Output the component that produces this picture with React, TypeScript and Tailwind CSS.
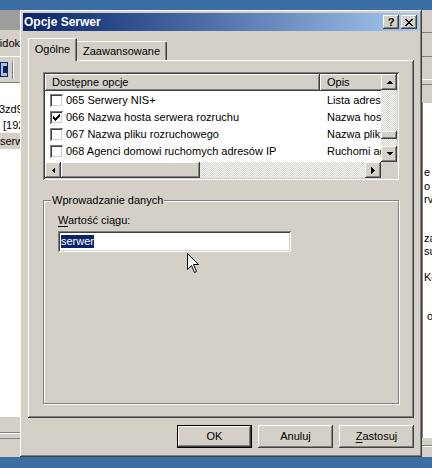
import React from "react";

// Win2000 bevels
const raised =
  "shadow-[inset_-1px_-1px_#404040,inset_1px_1px_#ffffff,inset_-2px_-2px_#808080,inset_2px_2px_#d4d0c8]";
const sunken =
  "shadow-[inset_1px_1px_#808080,inset_-1px_-1px_#ffffff,inset_2px_2px_#404040,inset_-2px_-2px_#d4d0c8]";
const headerBevel =
  "shadow-[inset_-1px_-1px_#404040,inset_1px_1px_#ffffff,inset_-2px_-2px_#808080]";
const dither =
  "bg-[image:repeating-conic-gradient(#d4d0c8_0_25%,#ffffff_0_50%)] bg-[length:2px_2px]";

type Dir = "up" | "down" | "left" | "right";

const Arrow = ({ dir }: { dir: Dir }) => {
  const vertical = dir === "up" || dir === "down";
  const pts: Record<Dir, string> = {
    up: "0,4 7,4 3.5,0.5",
    down: "0,0 7,0 3.5,3.5",
    left: "4,0 4,7 0.5,3.5",
    right: "0,0 0,7 3.5,3.5",
  };
  return (
    <svg
      width={vertical ? 7 : 4}
      height={vertical ? 4 : 7}
      viewBox={vertical ? "0 0 7 4" : "0 0 4 7"}
      shapeRendering="crispEdges"
    >
      <polygon points={pts[dir]} fill="#000" />
    </svg>
  );
};

const ScrollBtn = ({ dir }: { dir: Dir }) => (
  <div className={`w-4 h-4 shrink-0 bg-[#d4d0c8] flex items-center justify-center ${raised}`}>
    <Arrow dir={dir} />
  </div>
);

const Checkbox = ({ on }: { on: boolean }) => (
  <div className={`w-[13px] h-[13px] shrink-0 bg-white flex items-center justify-center ${sunken}`}>
    {on && (
      <svg width="7" height="7" viewBox="0 0 7 7" shapeRendering="crispEdges">
        <path d="M0 2h1v1h1v1h1v-1h1v-1h1v-1h1v-1h1v3h-1v1h-1v1h-1v1h-1v1h-1v-1h-1v-1h-1z" fill="#000" />
      </svg>
    )}
  </div>
);

const rows = [
  { on: false, name: "065 Serwery NIS+", desc: "Lista adresów serwerów NIS+" },
  { on: true, name: "066 Nazwa hosta serwera rozruchu", desc: "Nazwa hosta serwera rozruchu TFTP" },
  { on: false, name: "067 Nazwa pliku rozruchowego", desc: "Nazwa pliku rozruchowego" },
  { on: false, name: "068 Agenci domowi ruchomych adresów IP", desc: "Ruchomi agenci domowi IP" },
];

const OptionsList = () => (
  <div className={`w-[356px] h-[108px] p-[2px] bg-white ${sunken}`}>
    <div className="flex h-[88px]">
      <div className="w-[336px] overflow-hidden">
        <div className="flex h-[17px] w-[420px]">
          <div className={`w-[275px] shrink-0 bg-[#d4d0c8] pl-[7px] flex items-center ${headerBevel}`}>
            Dostępne opcje
          </div>
          <div className={`flex-1 bg-[#d4d0c8] pl-[7px] flex items-center ${headerBevel}`}>Opis</div>
        </div>
        <div className="pt-[1px]">
          {rows.map((r) => (
            <div key={r.name} className="flex h-[17px] items-center whitespace-nowrap">
              <div className="w-[275px] shrink-0 pl-[5px] flex items-center gap-[3px]">
                <Checkbox on={r.on} />
                <span>{r.name}</span>
              </div>
              <span className="pl-[7px]">{r.desc}</span>
            </div>
          ))}
        </div>
      </div>
      <div className="w-4 flex flex-col">
        <ScrollBtn dir="up" />
        <div className={`h-[41px] ${dither}`} />
        <div className={`h-[8px] bg-[#d4d0c8] ${raised}`} />
        <div className={`flex-1 ${dither}`} />
        <ScrollBtn dir="down" />
      </div>
    </div>
    <div className="flex h-4">
      <ScrollBtn dir="left" />
      <div className={`w-[139px] bg-[#d4d0c8] ${raised}`} />
      <div className={`flex-1 ${dither}`} />
      <ScrollBtn dir="right" />
      <div className="w-4 bg-[#d4d0c8]" />
    </div>
  </div>
);

const DialogButton = ({ children, primary }: { children: React.ReactNode; primary?: boolean }) => (
  <div
    className={`w-[75px] h-[23px] bg-[#d4d0c8] flex items-center justify-center ${
      primary ? "border border-black" : ""
    } ${raised}`}
  >
    {children}
  </div>
);

const Dialog = () => (
  <div className={`w-[402px] h-[447px] p-[3px] bg-[#d4d0c8] flex flex-col ${raised}`}>
    {/* title bar */}
    <div className="h-[18px] flex items-center bg-linear-to-r from-[#0a246a] to-[#a6caf0] pl-[1px] pr-[2px]">
      <span className="text-white font-bold text-[12px] leading-none">Opcje Serwer</span>
      <div className="ml-auto flex gap-[2px]">
        <div className={`w-4 h-[14px] bg-[#d4d0c8] flex items-center justify-center font-bold text-[11px] leading-none ${raised}`}>
          ?
        </div>
        <div className={`w-4 h-[14px] bg-[#d4d0c8] flex items-center justify-center ${raised}`}>
          <svg width="8" height="7" viewBox="0 0 8 7" shapeRendering="crispEdges">
            <path
              d="M0 0h2v1h1v1h2v-1h1v-1h2v1h-1v1h-1v1h-1v1h1v1h1v1h1v1h-2v-1h-1v-1h-2v1h-1v1h-2v-1h1v-1h1v-1h1v-1h-1v-1h-1v-1h-1z"
              fill="#000"
            />
          </svg>
        </div>
      </div>
    </div>

    {/* tabs */}
    <div className="mt-[7px] ml-[5px] h-[22px] flex items-end">
      <div className="relative z-10 h-[23px] -mb-[1px] w-[49px] bg-[#d4d0c8] border-t border-l border-white rounded-tl-[2px] border-r border-r-[#404040] shadow-[inset_-1px_0_#808080] flex items-center justify-center pb-[1px]">
        Ogólne
      </div>
      <div className="h-[19px] px-[6px] bg-[#d4d0c8] border-t border-white border-r border-r-[#404040] rounded-tr-[2px] shadow-[inset_-1px_0_#808080] flex items-center">
        Zaawansowane
      </div>
    </div>

    {/* tab panel */}
    <div className={`ml-[5px] w-[386px] h-[358px] px-[15px] pt-[12px] ${raised}`}>
      <OptionsList />

      <fieldset className="mt-[14px] h-[210px] border border-[#808080] shadow-[1px_1px_#ffffff,inset_1px_1px_#ffffff] px-[14px]">
        <legend className="-ml-[7px] px-[1px] leading-[13px] bg-[#d4d0c8]">Wprowadzanie danych</legend>
        <div className="pt-[7px] leading-[13px]">
          <span className="underline underline-offset-[2px]">W</span>artość ciągu:
        </div>
        <div className={`mt-[4px] w-[233px] h-[21px] bg-white pl-[3px] flex items-center ${sunken}`}>
          <span className="bg-[#0a246a] text-white leading-[13px]">serwer</span>
        </div>
      </fieldset>
    </div>

    {/* buttons */}
    <div className="mt-[7px] flex justify-end gap-[6px] pr-[5px]">
      <DialogButton primary>OK</DialogButton>
      <DialogButton>Anuluj</DialogButton>
      <DialogButton>
        <span>
          <span className="underline underline-offset-[2px]">Z</span>astosuj
        </span>
      </DialogButton>
    </div>
  </div>
);

const LeftWindow = () => (
  <div className="w-[20px] flex flex-col bg-[#d4d0c8] overflow-hidden">
    <div className="h-[20px] bg-[#9d9d9d]" />
    <div className="h-[26px] flex items-center justify-end whitespace-nowrap">Widok</div>
    <div className="h-[26px] border-t border-white flex items-center">
      <div className="w-[8px] h-[15px] border border-[#0a246a] bg-[#b6bdd2] flex items-center justify-end">
        <div className="w-[4px] h-[7px] bg-[#0a246a]" />
      </div>
      <div className="ml-[4px] w-[2px] h-[18px] border-l border-[#808080] border-r border-r-white" />
    </div>
    <div className="flex-1 bg-white border-t border-[#808080] pt-[18px] whitespace-nowrap">
      <div className="h-[16px] flex items-center -ml-[1px]">3zd9</div>
      <div className="h-[16px] flex items-center pl-[3px]">[192.168.0.1]</div>
      <div className="h-[16px] flex items-center bg-[#d4d0c8]">serwer</div>
    </div>
    <div className="h-[40px] flex flex-col">
      <div className="h-[15px]" />
      <div className="h-[1px] bg-[#808080]" />
      <div className="h-[1px] bg-white" />
      <div className="h-[4px]" />
      <div className="h-[1px] bg-[#808080]" />
    </div>
  </div>
);

const RightWindow = () => (
  <div className="w-[10px] flex flex-col bg-[#d4d0c8] overflow-hidden whitespace-nowrap">
    <div className="h-[93px] flex flex-col">
      <div className="h-[23px] border-b border-[#808080]" />
      <div className="h-[24px] border-b border-[#808080]" />
      <div className="h-[23px] border-b border-white" />
      <div className="h-[5px] border-b border-[#808080]" />
    </div>
    <div className="h-[335px] bg-white pl-[1px] border-l border-[#808080] leading-[13px]">
      <div className="mt-[63px]">e s</div>
      <div className="mt-[1px]">o r</div>
      <div>rv</div>
      <div className="mt-[26px]">za</div>
      <div>su</div>
      <div className="mt-[13px]">Ko</div>
      <div className="mt-[26px] pl-[3px]">o</div>
    </div>
    <div className="flex-1 flex flex-col">
      <div className="h-[7px]" />
      <div className="h-[1px] bg-[#808080]" />
      <div className="h-[1px] bg-white" />
    </div>
  </div>
);

export default function App() {
  return (
    <div className="relative w-[432px] h-[468px] overflow-hidden flex flex-col bg-[#3a6ea5] font-['Liberation_Sans',Arial,sans-serif] text-[11px] text-black">
      <div className="h-[10px] shrink-0" />
      <div className="flex h-[447px] shrink-0">
        <LeftWindow />
        <Dialog />
        <RightWindow />
      </div>

      {/* mouse pointer */}
      <svg className="absolute left-[187px] top-[253px]" width="13" height="21" viewBox="0 0 13 21">
        <path
          d="M0.5 0.5 L0.5 16.5 L4.5 12.5 L7.5 19.5 L9.5 18.5 L6.5 11.5 L11.5 11.5 Z"
          fill="#fff"
          stroke="#000"
          strokeWidth="1"
        />
      </svg>
    </div>
  );
}
